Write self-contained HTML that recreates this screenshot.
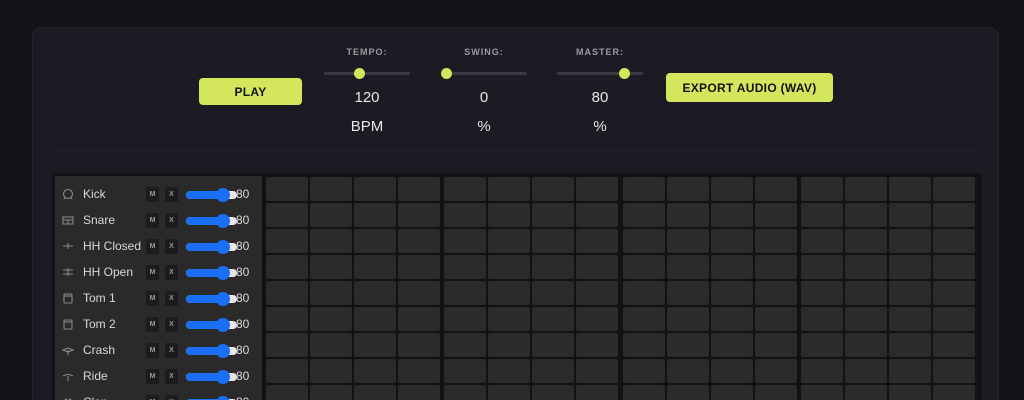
<!DOCTYPE html>
<html><head><meta charset="utf-8"><style>
*{margin:0;padding:0;box-sizing:border-box}
html,body{width:1024px;height:400px;overflow:hidden}
body{background:#121318;font-family:"Liberation Sans",sans-serif}
#wrap{position:relative;width:1024px;height:400px;overflow:hidden}
.panel{position:absolute;left:32px;top:27px;width:967px;height:400px;background:#1b1c23;border-radius:10px;border:1px solid #24252c}
.abs{position:absolute}
.btn{position:absolute;background:#d4e75c;border-radius:4px;color:#111;font-weight:bold;font-size:12px;display:flex;align-items:center;justify-content:center;letter-spacing:.3px}
.lbl{position:absolute;width:100px;text-align:center;color:#9a9ba2;font-size:9px;font-weight:bold;letter-spacing:1px}
.val{position:absolute;width:100px;text-align:center;color:#e6e6e8;font-size:15px}
.trk{position:absolute;height:3px;background:#3a3b42;border-radius:2px}
.th{position:absolute;width:11px;height:11px;border-radius:50%;background:#d4e75c}
.grid{position:absolute;left:52px;top:173px;width:930px;height:260px;background:#111214;border-radius:4px}
.tracks{position:absolute;left:55px;top:176px;width:207px;height:260px;background:#2a2a2a}
.cell{position:absolute;width:42px;height:24px;background:#2b2b2b;border-radius:2px}
.row{position:absolute;left:55px;height:26px;width:207px}
.name{position:absolute;left:28px;top:5px;color:#d8d8da;font-size:12px}
.mb{position:absolute;top:5px;width:13px;height:15px;background:#1c1c1c;border-radius:2px;color:#999;font-size:7px;font-weight:bold;text-align:center;line-height:15px}
.sl{position:absolute;left:131px;top:9px;width:51px;height:8px;background:#e8e8e8;border-radius:4px}
.sl i{position:absolute;left:0;top:0;width:38px;height:8px;background:#1a6ef5;border-radius:4px}
.sl b{position:absolute;left:30px;top:-3px;width:14px;height:14px;border-radius:50%;background:#1a6ef5}
.v{position:absolute;left:181px;top:5px;color:#d8d8da;font-size:12px}
.ic{position:absolute;left:7px;top:6px}
</style></head><body><div id="wrap">
<div class="panel"></div>
<div class="btn" style="left:199px;top:78px;width:103px;height:27px">PLAY</div>
<div class="btn" style="left:666px;top:73px;width:167px;height:29px">EXPORT AUDIO (WAV)</div>
<div class="lbl" style="left:317px;top:47px">TEMPO:</div>
<div class="lbl" style="left:434px;top:47px">SWING:</div>
<div class="lbl" style="left:550px;top:47px">MASTER:</div>
<div class="trk" style="left:324px;top:72px;width:86px"></div><div class="th" style="left:354px;top:68px"></div>
<div class="trk" style="left:441px;top:72px;width:86px"></div><div class="th" style="left:441px;top:68px"></div>
<div class="trk" style="left:557px;top:72px;width:86px"></div><div class="th" style="left:619px;top:68px"></div>
<div class="val" style="left:317px;top:89px">120</div><div class="val" style="left:317px;top:118px">BPM</div>
<div class="val" style="left:434px;top:89px">0</div><div class="val" style="left:434px;top:118px">%</div>
<div class="val" style="left:550px;top:89px">80</div><div class="val" style="left:550px;top:118px">%</div>
<div class="abs" style="left:52px;top:150px;width:926px;height:1px;background:#24252c"></div>
<div class="grid"></div>
<div class="tracks"></div>
<div id="cells"></div>
<div id="rows"></div>
</div>
<script>
var c='',gx=[266,444,623,801];
for(var r=0;r<9;r++){for(var g=0;g<4;g++)for(var k=0;k<4;k++){c+='<div class="cell" style="left:'+(gx[g]+k*44)+'px;top:'+(177+r*26)+'px"></div>';}}
document.getElementById('cells').innerHTML=c;
var n=['Kick','Snare','HH Closed','HH Open','Tom 1','Tom 2','Crash','Ride','Clap'],h='';
var icons=['<circle cx="6" cy="6" r="4.5"/><path d="M2 11l2-2M10 11l-2-2"/>','<rect x="1" y="3" width="10" height="7"/><path d="M1 6h10M6 6v4"/>','<path d="M1 6h10M6 3v6"/>','<path d="M1 4h10M1 8h10M6 2v8"/>','<rect x="2" y="2" width="8" height="9" rx="1"/><path d="M2 4h8"/>','<rect x="2" y="2" width="8" height="9" rx="1"/><path d="M2 4h8"/>','<path d="M1 6l5-2 5 2-5 2zM6 6v5"/>','<path d="M1 6q5-3 10 0M6 6v5"/>','<path d="M2 11V5l2-2 2 2 2-2 2 2v6"/>'];
for(var i=0;i<9;i++){h+='<div class="row" style="top:'+(182+i*26)+'px"><svg class="ic" width="12" height="12" fill="none" stroke="#888" stroke-width="1.1">'+icons[i]+'</svg><div class="name">'+n[i]+'</div><div class="mb" style="left:91px">M</div><div class="mb" style="left:110px">X</div><div class="sl"><i></i><b></b></div><div class="v">80</div></div>';}
document.getElementById('rows').innerHTML=h;
</script>
</body></html>
